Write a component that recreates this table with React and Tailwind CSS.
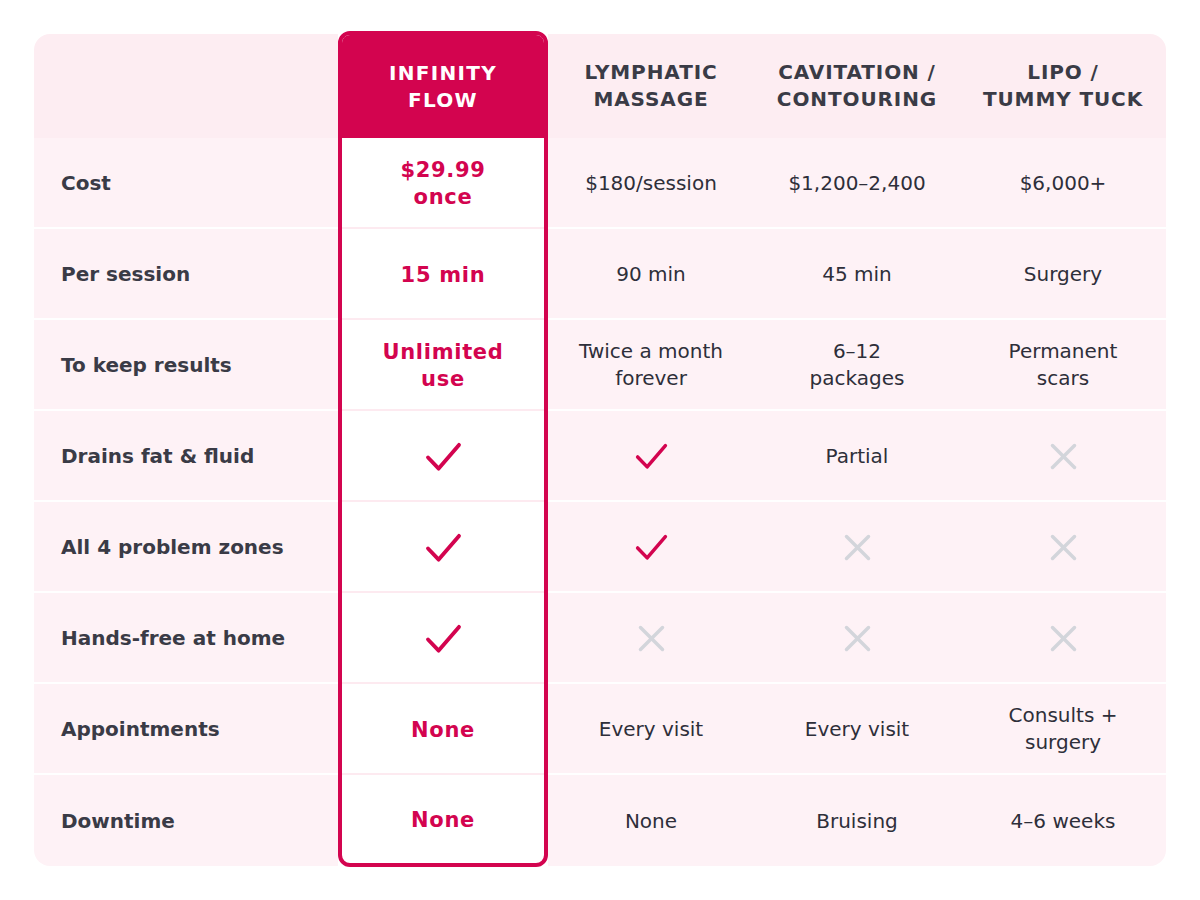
import React from "react";

const CRIMSON = "#d3044f";

function Check({ big }) {
  return (
    <svg
      width={big ? 37 : 33}
      height={big ? 30 : 27}
      viewBox="0 0 38 31"
      fill="none"
      stroke={CRIMSON}
      strokeWidth="4"
      strokeLinecap="round"
      strokeLinejoin="round"
    >
      <polyline points="3,16 14,27.5 35,3" />
    </svg>
  );
}

function XMark() {
  return (
    <svg width="27" height="27" viewBox="0 0 27 27" fill="none" stroke="#d3d5db" strokeWidth="3.5" strokeLinecap="round">
      <line x1="2.5" y1="2.5" x2="24.5" y2="24.5" />
      <line x1="24.5" y1="2.5" x2="2.5" y2="24.5" />
    </svg>
  );
}

const rows = [
  { label: "Cost", hi: <>$29.99<br />once</>, cells: ["$180/session", "$1,200–2,400", "$6,000+"] },
  { label: "Per session", hi: "15 min", cells: ["90 min", "45 min", "Surgery"] },
  {
    label: "To keep results",
    hi: <>Unlimited<br />use</>,
    cells: [<>Twice a month<br />forever</>, <>6–12<br />packages</>, <>Permanent<br />scars</>],
  },
  { label: "Drains fat & fluid", hi: "CHECK", cells: ["CHECK", "Partial", "X"] },
  { label: "All 4 problem zones", hi: "CHECK", cells: ["CHECK", "X", "X"] },
  { label: "Hands-free at home", hi: "CHECK", cells: ["X", "X", "X"] },
  { label: "Appointments", hi: "None", cells: ["Every visit", "Every visit", <>Consults +<br />surgery</>] },
  { label: "Downtime", hi: "None", cells: ["None", "Bruising", "4–6 weeks"] },
];

function renderCell(v, big) {
  if (v === "CHECK") return <Check big={big} />;
  if (v === "X") return <XMark />;
  return v;
}

export default function App() {
  return (
    <div
      className="bg-white w-[1200px] h-[900px] p-[34px] text-[20px] leading-[27px]"
      style={{ fontFamily: '"DejaVu Sans", Verdana, sans-serif' }}
    >
      <div className="flex w-[1132px]">
        {/* label column */}
        <div className="w-[304px] flex flex-col rounded-l-2xl overflow-hidden">
          <div className="h-[104px] bg-[#fdedf2]" />
          {rows.map((r, i) => (
            <div
              key={i}
              className={`h-[91px] pt-px bg-[#fef2f6] flex items-center pl-[27px] font-bold text-[#3a3b46] ${
                i < rows.length - 1 ? "border-b-2 border-white" : ""
              }`}
            >
              {r.label}
            </div>
          ))}
        </div>

        {/* highlight column */}
        <div className="w-[210px] -mt-[3px] -mb-px flex flex-col border-4 border-[#d3044f] rounded-xl overflow-hidden bg-white">
          <div className="h-[103px] bg-[#d3044f] flex items-center justify-center text-center font-bold text-white tracking-[1.3px]">
            <span>INFINITY<br />FLOW</span>
          </div>
          {rows.map((r, i) => (
            <div
              key={i}
              className={`pt-[3px] flex items-center justify-center text-center font-bold text-[21px] tracking-[0.7px] text-[#d3044f] ${
                i < rows.length - 1 ? "h-[91px] border-b-2 border-[#fdeaf0]" : "h-[88px]"
              }`}
            >
              {renderCell(r.hi, true)}
            </div>
          ))}
        </div>

        {/* other columns */}
        <div className="w-[618px] flex flex-col rounded-r-2xl overflow-hidden">
          <div className="h-[104px] bg-[#fdedf2] grid grid-cols-3 font-bold text-[#3a3b46] tracking-[0.9px] text-center">
            <div className="flex items-center justify-center">
              <span>LYMPHATIC<br />MASSAGE</span>
            </div>
            <div className="flex items-center justify-center">
              <span>CAVITATION /<br />CONTOURING</span>
            </div>
            <div className="flex items-center justify-center">
              <span>LIPO /<br />TUMMY TUCK</span>
            </div>
          </div>
          {rows.map((r, i) => (
            <div
              key={i}
              className={`h-[91px] pt-px bg-[#fef2f6] grid grid-cols-3 text-[#2e2f3a] text-center ${
                i < rows.length - 1 ? "border-b-2 border-white" : ""
              }`}
            >
              {r.cells.map((c, j) => (
                <div key={j} className="flex items-center justify-center">
                  <span className="flex items-center justify-center">{renderCell(c, false)}</span>
                </div>
              ))}
            </div>
          ))}
        </div>
      </div>
    </div>
  );
}
